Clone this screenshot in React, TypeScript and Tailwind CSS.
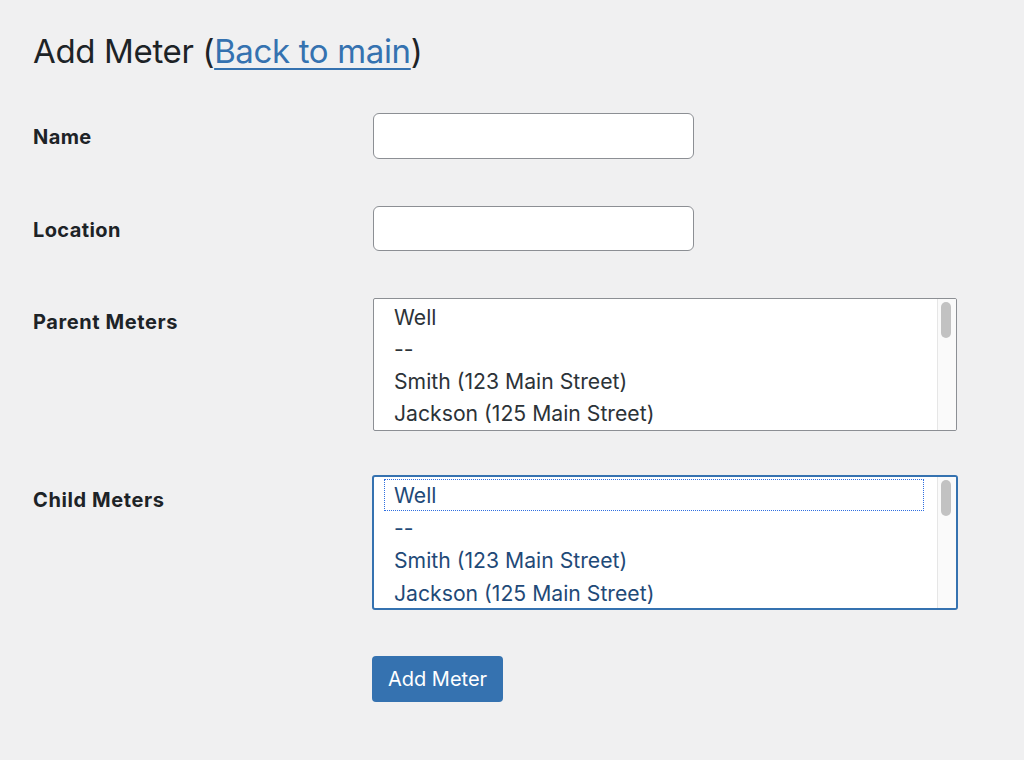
import React from "react";

const font = { fontFamily: "Inter, 'Liberation Sans', sans-serif" };

function Scrollbar() {
  return (
    <div className="absolute right-0 top-0 bottom-0 w-[19px] bg-[#fafafa] border-l border-[#e6e6e6]">
      <div className="absolute left-[3px] top-[3px] w-[10px] h-[36px] rounded-full bg-[#c2c2c2]" />
    </div>
  );
}

const options = ["Well", "--", "Smith (123 Main Street)", "Jackson (125 Main Street)"];

export default function App() {
  return (
    <div className="min-h-[760px] w-[1024px] bg-[#f0f0f1] pl-[33px] pt-[31px] text-[#1d2327]" style={font}>
      <h1 className="text-[33px] leading-[40px] font-normal tracking-[-0.35px]">
        Add Meter (<a href="#" className="text-[#3572b0] underline decoration-[2px] underline-offset-[5px]">Back to main</a>)
      </h1>

      <div className="mt-[42px] flex items-start">
        <div className="w-[340px] pt-[12px] text-[20px] leading-[25px] font-bold tracking-[0.4px]">Name</div>
        <div className="w-[321px] h-[46px] rounded-[6px] border border-[#8c8f94] bg-white" />
      </div>

      <div className="mt-[47px] flex items-start">
        <div className="w-[340px] pt-[12px] text-[20px] leading-[25px] font-bold tracking-[0.4px]">Location</div>
        <div className="w-[321px] h-[45px] rounded-[6px] border border-[#8c8f94] bg-white" />
      </div>

      <div className="mt-[47px] flex items-start">
        <div className="w-[340px] pt-[12px] text-[20px] leading-[25px] font-bold tracking-[0.6px]">Parent Meters</div>
        <div className="relative w-[584px] h-[133px] rounded-[2px] border border-[#8c8f94] bg-white overflow-hidden pt-[2px]">
          {options.map((o) => (
            <div key={o} className="h-[32px] pl-[20px] text-[21.2px] leading-[32px] text-[#2c3338]">{o}</div>
          ))}
          <Scrollbar />
        </div>
      </div>

      <div className="mt-[44px] flex items-start">
        <div className="w-[339px] pt-[13px] text-[20px] leading-[25px] font-bold tracking-[0.6px]">Child Meters</div>
        <div className="relative w-[586px] h-[135px] rounded-[3px] border-2 border-[#3572b0] bg-white overflow-hidden pt-[2px]">
          {options.map((o, i) => (
            <div key={o} className="h-[32.7px] pl-[10px] pr-[32px]">
              <div className={"h-[32px] pl-[10px] text-[21.2px] leading-[33px] text-[#1f4a78] " + (i === 0 ? "outline outline-1 outline-dotted outline-[#2f6fe0] -outline-offset-1" : "")}>{o}</div>
            </div>
          ))}
          <Scrollbar />
        </div>
      </div>

      <div className="mt-[46px] pl-[339px]">
        <button className="w-[131px] h-[46px] rounded-[4px] bg-[#3572b0] text-white text-[20px] leading-[46px] text-center">Add Meter</button>
      </div>
    </div>
  );
}
